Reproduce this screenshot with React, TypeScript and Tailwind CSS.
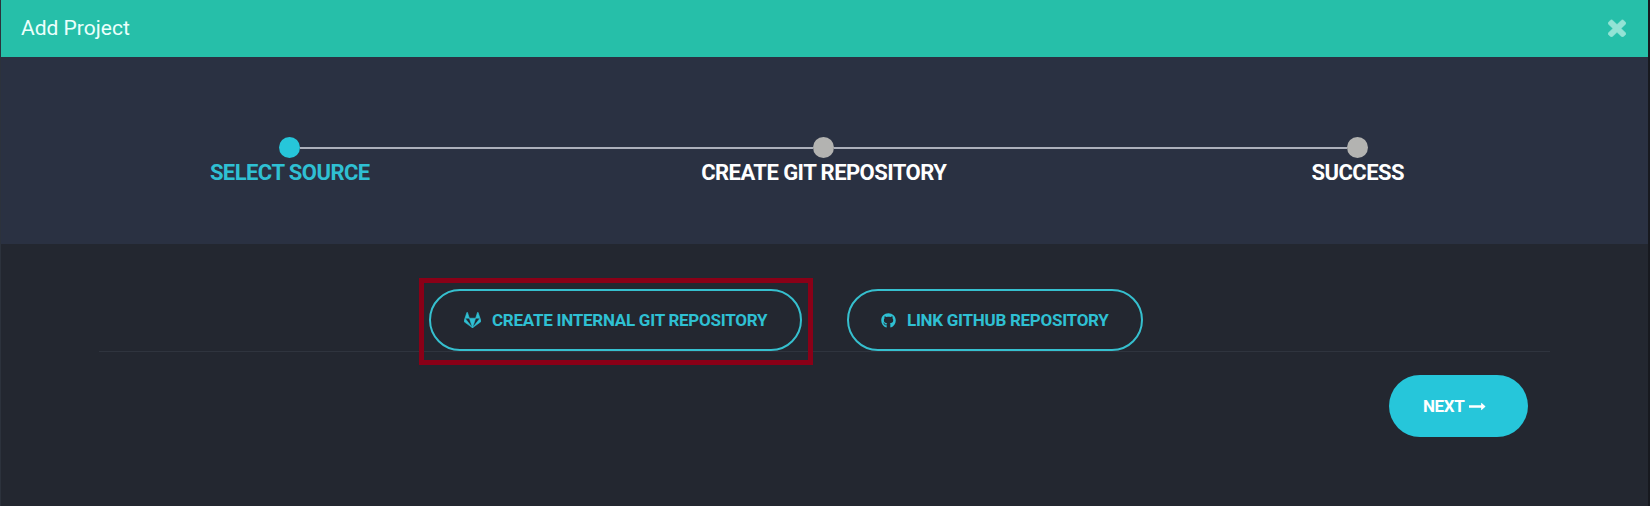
import React from "react";
import { FaGithub } from "react-icons/fa";

type Step = { label: string; active?: boolean };

const steps: Step[] = [
  { label: "SELECT SOURCE", active: true },
  { label: "CREATE GIT REPOSITORY" },
  { label: "SUCCESS" },
];

function CloseIcon() {
  return (
    <svg viewBox="302 238 1188 1316" preserveAspectRatio="none" className="h-[19px] w-[18px]" fill="currentColor" stroke="currentColor" strokeWidth="30">
      <path d="M1490 1322q0 40-28 68l-136 136q-28 28-68 28t-68-28l-294-294-294 294q-28 28-68 28t-68-28l-136-136q-28-28-28-68t28-68l294-294-294-294q-28-28-28-68t28-68l136-136q28-28 68-28t68 28l294 294 294-294q28-28 68-28t68 28l136 136q28 28 28 68t-28 68l-294 294 294 294q28 28 28 68z" />
    </svg>
  );
}

function GitlabIcon() {
  return (
    <svg viewBox="0 71 1792 1650" className="h-[16px] w-[17px] shrink-0" fill="currentColor" stroke="currentColor" strokeWidth="60" strokeLinejoin="round">
      <path d="M104 706l792 1015-868-630q-18-13-25-34.5t0-42.5zM566 706h660l-330 1015zM368 94l198 612h-462l198-612q8-23 33-23t33 23zM1688 706l101 308q7 21 0 42.5t-25 34.5l-868 630zM1688 706h-462l198-612q8-23 33-23t33 23z" />
    </svg>
  );
}

function ArrowIcon() {
  return (
    <svg viewBox="0 0 1792 1792" className="h-[17px] w-[17px] shrink-0" fill="currentColor">
      <path d="M1728 893q0 14-10 24l-384 354q-16 14-35 6-19-9-19-29v-224h-1248q-14 0-23-9t-9-23v-192q0-14 9-23t23-9h1248v-224q0-21 19-29t35 5l384 350q10 10 10 23z" />
    </svg>
  );
}

function Stepper() {
  return (
    <ol className="flex h-[187px] bg-[#2a3142] pt-20 pl-[21px]">
      {steps.map((step, i) => (
        <li key={step.label} className="flex w-[534px] shrink-0 flex-col items-center">
          <div className="flex h-[21px] w-full items-center">
            <span className={i === 0 ? "h-0.5 flex-1" : "h-0.5 flex-1 bg-[#acb0bb]"} />
            <span className={step.active ? "size-[21px] rounded-full bg-[#26c6da]" : "size-[21px] rounded-full bg-[#b3b3b1]"} />
            <span className={i === steps.length - 1 ? "h-0.5 flex-1" : "h-0.5 flex-1 bg-[#acb0bb]"} />
          </div>
          <span className={step.active ? "pl-[1.5px] text-[22px] leading-[30px] font-bold tracking-[-0.55px] text-[#2fc0d3]" : "pl-[1.5px] text-[22px] leading-[30px] font-bold tracking-[-0.55px] text-white"}>
            {step.label}
          </span>
        </li>
      ))}
    </ol>
  );
}

export default function App() {
  return (
    <div className="h-[506px] w-[1650px] overflow-hidden border-r-2 border-l border-r-[#17191f] border-l-[#2c323c] bg-[#232730] font-['Roboto','Liberation_Sans',sans-serif]">
      <header className="flex h-[57px] items-center justify-between bg-[#26bfa9] pr-[22px] pb-0.5 pl-5">
        <h1 className="text-[21px] leading-6 text-[#ecfffc]">Add Project</h1>
        <button aria-label="Close" className="mb-px text-[#93e3d5]">
          <CloseIcon />
        </button>
      </header>
      <Stepper />
      <main className="pr-[98px] pl-[98px]">
        <div className="flex h-[108px] items-start border-b border-[#2f343e] pt-[34px] pl-[320px]">
          <div className="-mb-3.5 h-[87px] w-[394px] shrink-0 border-5 border-[#8a0017] p-[5px] pt-[6px]">
            <button className="flex h-[62px] w-[373px] items-center rounded-full border-2 border-[#36c0cf] pl-[33px] text-[17px] font-bold tracking-[-0.26px] whitespace-nowrap text-[#2fc0d3]">
              <GitlabIcon />
              <span className="mt-0.5 ml-[11px]">CREATE INTERNAL GIT REPOSITORY</span>
            </button>
          </div>
          <button className="mt-[11px] ml-[34px] flex h-[62px] w-[296px] shrink-0 items-center rounded-full border-2 border-[#36c0cf] pl-8 text-[17px] font-bold tracking-[-0.28px] whitespace-nowrap text-[#2fc0d3]">
            <FaGithub className="size-[15px] shrink-0" />
            <span className="mt-0.5 ml-[11px]">LINK GITHUB REPOSITORY</span>
          </button>
        </div>
        <div className="flex justify-end pt-[23px] pr-[22px]">
          <button className="flex h-[62px] w-[139px] items-center rounded-full bg-[#26c6da] pl-[34px] text-[17px] font-bold tracking-[-0.4px] text-white">
            <span className="mt-0.5 mr-[5px]">NEXT</span>
            <ArrowIcon />
          </button>
        </div>
      </main>
    </div>
  );
}
